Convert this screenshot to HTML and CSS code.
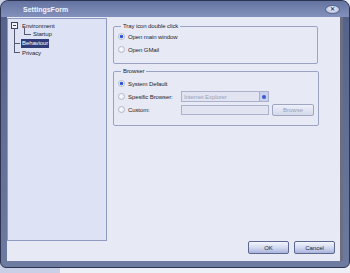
FILE: index.html
```html
<!DOCTYPE html>
<html lang="en">
<head>
    <meta charset="UTF-8">
    <title>SettingsForm</title>
    <link rel="stylesheet" href="styles.css">
</head>
<body>

<div class="window">
    <div class="titlebar">
        <span class="title">SettingsForm</span>
        <span class="close">&#x2715;</span>
    </div>

    <div class="client">
        <div class="main">
            <div class="tree">
                <div class="node root">
                    <span class="toggle"></span>Environment
                </div>
                <div class="branch">
                    <div class="node child"><span class="elbow"></span>Startup</div>
                    <div class="node top"><span class="tick"></span><span class="selected">Behaviour</span></div>
                    <div class="node top"><span class="tick"></span><span>Privacy</span></div>
                </div>
            </div>

            <div class="options">
                <fieldset class="group tray">
                    <legend>Tray icon double click</legend>
                    <label class="radio"><span class="dot checked"></span>Open main window</label>
                    <label class="radio"><span class="dot"></span>Open GMail</label>
                </fieldset>

                <fieldset class="group browser">
                    <legend>Browser</legend>
                    <label class="radio"><span class="dot checked"></span>System Default</label>
                    <div class="row">
                        <label class="radio wide"><span class="dot"></span>Spesific Browser:</label>
                        <div class="combo">
                            <span>Internet Explorer</span>
                            <span class="drop"><span class="arrow"></span></span>
                        </div>
                    </div>
                    <div class="row">
                        <label class="radio wide"><span class="dot"></span>Custom:</label>
                        <div class="textbox"></div>
                        <button class="btn disabled">Browse</button>
                    </div>
                </fieldset>
            </div>
        </div>

        <div class="actions">
            <button class="btn">OK</button>
            <button class="btn">Cancel</button>
        </div>
    </div>
</div>

</body>
</html>
```

FILE: styles.css
```css
* {
    margin: 0;
    padding: 0;
    box-sizing: border-box;
}

body {
    font-family: 'Liberation Sans', Arial, sans-serif;
    font-size: 6px;
    letter-spacing: -0.1px;
    color: #1c1f2e;
    background: linear-gradient(90deg, #c9cfe6 0, #c9cfe6 60px, #eef0f8 60px);
    width: 350px;
    height: 273px;
    overflow: hidden;
}

.window {
    width: 350px;
    height: 268px;
    background: linear-gradient(180deg, #3e4a70 0, #56638c 20px, #6e7ba0 100%);
    border-radius: 8px 8px 6px 6px;
    padding: 0 6px 6px 6px;
    display: flex;
    flex-direction: column;
    border: 1px solid #2c3452;
}

.titlebar {
    height: 16px;
    display: flex;
    align-items: center;
    justify-content: space-between;
    background: linear-gradient(180deg, #6573a0, #8290bb);
    margin: 0 -6px;
    padding: 0 9px 0 22px;
    border-radius: 7px 7px 0 0;
}

.title {
    color: #f2f4fb;
    font-weight: bold;
    font-size: 7px;
    letter-spacing: 0;
}

.close {
    width: 15px;
    height: 9px;
    border-radius: 50%;
    background: radial-gradient(ellipse at 50% 35%, #f4f6fc, #aab4d6);
    border: 1px solid #5a6790;
    color: #2c3c80;
    font-size: 6px;
    line-height: 7px;
    text-align: center;
    font-weight: bold;
}

.client {
    flex: 1;
    background: #e7e9f5;
    border-right: 3px solid #6c6f82;
    display: flex;
    flex-direction: column;
    padding-top: 1px;
}

.main {
    display: flex;
    gap: 6px;
}

/* tree view */

.tree {
    width: 100px;
    height: 223px;
    background: #dde2f5;
    border: 1px solid #8e9ac0;
    padding: 2px 0 0 3px;
}

.node {
    height: 9px;
    display: flex;
    align-items: center;
    white-space: nowrap;
}

.toggle {
    width: 7px;
    height: 7px;
    border: 1px solid #3c4258;
    background: linear-gradient(#3c4258, #3c4258) no-repeat center / 3px 1px, #f2f4fb;
    margin-right: 4px;
}

.branch {
    position: relative;
    margin-left: 3px;
}

.branch::before {
    content: "";
    position: absolute;
    left: 0;
    top: -2px;
    bottom: 4px;
    width: 1px;
    background: #555a70;
}

.child {
    padding-left: 10px;
    align-items: flex-start;
}

.elbow {
    width: 7px;
    height: 7px;
    margin-top: -2px;
    border-left: 1px solid #555a70;
    border-bottom: 1px solid #555a70;
    margin-right: 2px;
}

.child {
    line-height: 9px;
}

.tick {
    width: 6px;
    height: 1px;
    background: #555a70;
    margin-right: 1px;
}

.selected {
    background: #2f3c78;
    color: #ffffff;
    padding: 0 1px;
    line-height: 9px;
}

.top span:last-child:not(.selected) {
    padding-left: 1px;
}

/* option groups */

.options {
    padding-top: 4px;
    display: flex;
    flex-direction: column;
    gap: 3px;
}

.group {
    width: 205px;
    border: 1px solid #9aa3c2;
    border-radius: 2px;
    padding: 0 4px;
}

.group legend {
    padding: 0 2px;
    margin-left: 3px;
    line-height: 8px;
}

.tray {
    height: 42px;
}

.browser {
    height: 59px;
    padding-top: 2px;
}

.radio {
    display: flex;
    align-items: center;
    height: 13px;
    white-space: nowrap;
}

.dot {
    width: 7px;
    height: 7px;
    border-radius: 50%;
    border: 1px solid #b4bad0;
    background: radial-gradient(circle at 40% 40%, #ffffff, #dfe3ee);
    margin-right: 3px;
    flex-shrink: 0;
}

.dot.checked {
    background: radial-gradient(circle, #2d4fc6 0, #3f62d8 1.5px, #ffffff 2.2px, #e0e5f2 100%);
}

.row {
    display: flex;
    align-items: center;
    height: 13px;
}

.wide {
    width: 63px;
}

.combo {
    width: 88px;
    height: 11px;
    border: 1px solid #a9b1cc;
    background: #e2e5f1;
    color: #9ba1b6;
    display: flex;
    align-items: center;
    justify-content: space-between;
    padding-left: 2px;
}

.drop {
    width: 9px;
    height: 9px;
    background: #c9d1ee;
    border-left: 1px solid #a9b1cc;
    display: flex;
    align-items: center;
    justify-content: center;
}

.arrow {
    width: 4px;
    height: 4px;
    border-radius: 50%;
    background: #3b5bd0;
}

.textbox {
    width: 88px;
    height: 10px;
    border: 1px solid #a9b1cc;
    background: #e2e5f1;
}

.btn {
    font-family: 'Liberation Sans', Arial, sans-serif;
    font-size: 6px;
    color: #1c1f2e;
    height: 13px;
    border: 1px solid #5d6890;
    border-radius: 2px;
    background: linear-gradient(180deg, #f3f5fc 0, #d4daf0 50%, #a9b4dc 100%);
}

.btn.disabled {
    width: 42px;
    height: 12px;
    margin-left: 3px;
    color: #9aa0b6;
    border-color: #9ea6c2;
    background: linear-gradient(180deg, #eef0f8, #d3d8ea);
}

.actions {
    margin-top: auto;
    display: flex;
    justify-content: flex-end;
    gap: 5px;
    padding: 0 5px 7px 0;
}

.actions .btn {
    width: 41px;
}
```
